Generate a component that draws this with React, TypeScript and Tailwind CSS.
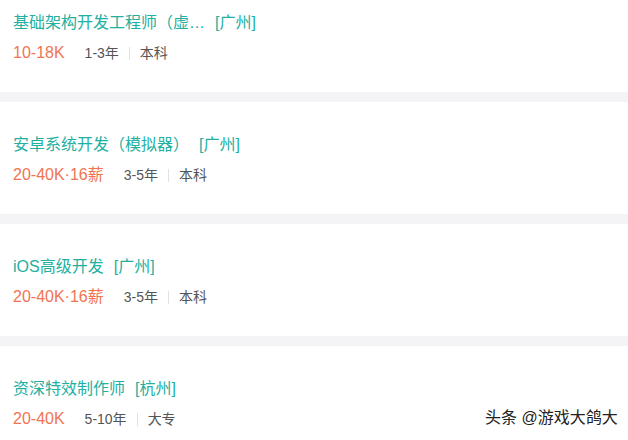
import React from "react";

const jobs = [
  { title: "基础架构开发工程师（虚…", city: "[广州]", salary: "10-18K", exp: "1-3年", edu: "本科" },
  { title: "安卓系统开发（模拟器）", city: "[广州]", salary: "20-40K·16薪", exp: "3-5年", edu: "本科" },
  { title: "iOS高级开发", city: "[广州]", salary: "20-40K·16薪", exp: "3-5年", edu: "本科" },
  { title: "资深特效制作师", city: "[杭州]", salary: "20-40K", exp: "5-10年", edu: "大专" },
];

export default function App() {
  return (
    <div
      className="relative w-[628px] h-[440px] overflow-hidden bg-[#f4f4f6]"
      style={{ fontFamily: '"Liberation Sans", "Noto Sans CJK SC", sans-serif' }}
    >
      <div className="-mt-[20px] flex flex-col gap-[10px]">
        {jobs.map((j, i) => (
          <div key={i} className="h-[112px] bg-white px-[13px] pt-[32px]">
            <div className="flex items-center h-[22px] text-[16px] text-[#23b0a0] whitespace-nowrap">
              <span>{j.title}</span>
              <span className="ml-[10px]">{j.city}</span>
            </div>
            <div className="mt-[8px] flex items-center h-[22px] whitespace-nowrap">
              <span className="text-[16px] text-[#f07452]">{j.salary}</span>
              <span className="ml-[20px] text-[14px] text-[#555]">{j.exp}</span>
              <span className="mx-[10px] h-[13px] w-px bg-[#e2e2e2]" />
              <span className="text-[14px] text-[#555]">{j.edu}</span>
            </div>
          </div>
        ))}
      </div>
      <div
        className="absolute left-[485px] top-[406px] text-[16px] text-[#222] whitespace-nowrap"
        style={{ textShadow: "0 0 2px #fff" }}
      >
        头条 @游戏大鸽大
      </div>
    </div>
  );
}
